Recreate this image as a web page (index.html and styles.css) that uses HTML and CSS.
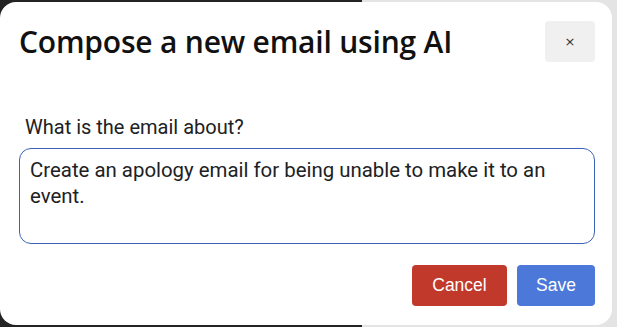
FILE: index.html
```html
<!DOCTYPE html>
<html>
<head>
<meta charset="utf-8">
<link rel="stylesheet" href="styles.css">
</head>
<body>
<div class="dialog">
  <div class="header">
    <h1 class="title">Compose a new email using AI</h1>
    <button class="close">×</button>
  </div>
  <label class="label">What is the email about?</label>
  <div class="textarea">Create an apology email for being unable to make it to an event.</div>
  <div class="actions">
    <button class="btn cancel">Cancel</button>
    <button class="btn save">Save</button>
  </div>
</div>
</body>
</html>
```
FILE: styles.css
```css
html, body {
  margin: 0;
  padding: 0;
}
body {
  width: 617px;
  height: 327px;
  overflow: hidden;
  background: linear-gradient(to right, #232323 362px, #e4e4e4 362px);
  font-family: Roboto, "Liberation Sans", sans-serif;
}
.dialog {
  box-sizing: border-box;
  margin-top: 2px;
  width: 612px;
  height: 323px;
  background: #fff;
  border-radius: 16px;
  padding: 19px 17px 0 19px;
  display: flex;
  flex-direction: column;
}
.header {
  display: flex;
  justify-content: space-between;
  align-items: flex-start;
  height: 41px;
}
.title {
  margin: 0;
  font-family: "Open Sans", Roboto, sans-serif;
  font-weight: 600;
  font-size: 30px;
  line-height: 41px;
  color: #111;
  letter-spacing: -0.2px;
}
.close {
  width: 50px;
  height: 41px;
  border: none;
  border-radius: 4px;
  background: #f0f0f0;
  font-size: 13px;
  color: #333;
  padding: 0;
  font-family: "DejaVu Sans", sans-serif;
}
.label {
  margin: 53px 0 0 6px;
  font-size: 20px;
  line-height: 24px;
  color: #202124;
}
.textarea {
  box-sizing: border-box;
  margin-top: 9px;
  height: 96px;
  border: 1px solid #3b62b8;
  border-radius: 12px;
  padding: 8px 30px 0 10px;
  font-size: 20.4px;
  line-height: 26px;
  color: #202124;
}
.actions {
  display: flex;
  justify-content: flex-end;
  gap: 10px;
  margin-top: 21px;
}
.btn {
  height: 41px;
  border: none;
  border-radius: 4px;
  color: #fff;
  font-family: "Liberation Sans", Arial, sans-serif;
  font-size: 17.5px;
  padding: 0;
}
.cancel {
  width: 95px;
  background: #c0392b;
}
.save {
  width: 78px;
  background: #4b78d9;
}
```
